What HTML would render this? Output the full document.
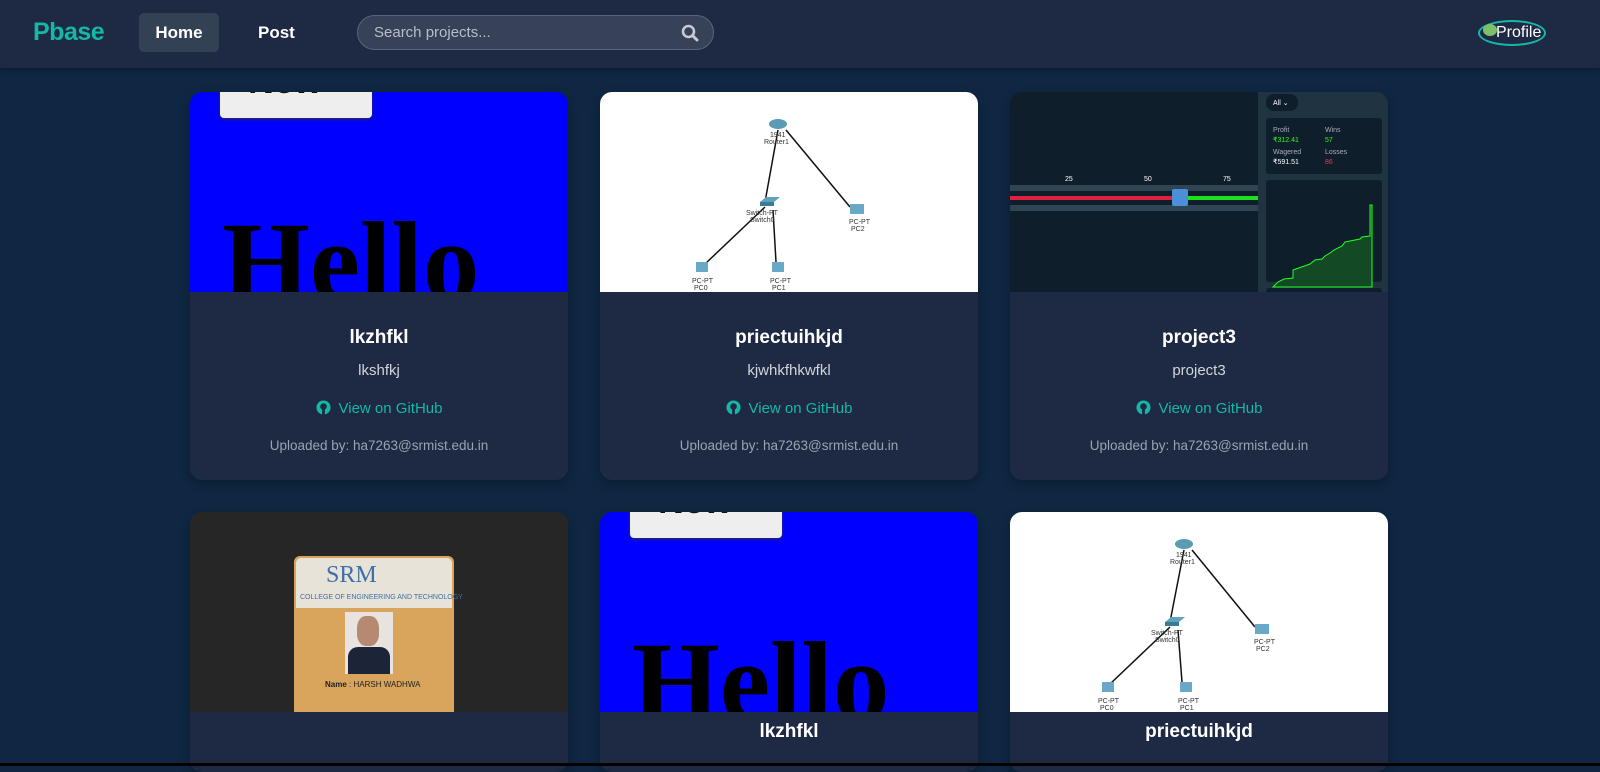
<!DOCTYPE html>
<html><head><meta charset="utf-8"><style>
*{box-sizing:border-box;margin:0;padding:0}
body{width:1600px;height:766px;overflow:hidden;background:#0f2742;font-family:"Liberation Sans",sans-serif;position:relative}
.nav{position:absolute;left:0;top:0;width:1600px;height:68px;background:#1e2943;box-shadow:0 2px 6px rgba(0,0,0,.3)}
.logo{position:absolute;left:33px;top:18px;color:#14b8a6;font-weight:bold;font-size:25px;letter-spacing:-.5px}
.home{position:absolute;left:139px;top:13px;width:80px;height:39px;background:#334155;border-radius:5px;color:#fff;font-size:17px;font-weight:bold;text-align:center;line-height:39px}
.post{position:absolute;left:258px;top:13px;color:#fff;font-size:17px;font-weight:bold;line-height:39px}
.search{position:absolute;left:357px;top:15px;width:357px;height:35px;background:#374157;border:1px solid #5b6477;border-radius:18px;color:#b8bec9;font-size:15px;line-height:33px;padding-left:16px}
.prof{position:absolute;left:1478px;top:20px;width:68px;height:26px;border:2px solid #14b8a6;border-radius:50%;color:#fff;font-size:16px;line-height:22px;padding-left:16px;background:#1e2943}
.card{position:absolute;width:378px;background:#1e2943;border-radius:12px;overflow:hidden;box-shadow:0 4px 10px rgba(0,0,0,.25)}
.img{position:absolute;left:0;top:0;width:378px;height:200px;overflow:hidden}
.t{position:absolute;width:100%;text-align:center;color:#fff;font-weight:bold;font-size:19px}
.d{position:absolute;width:100%;text-align:center;color:#d1d5db;font-size:15px}
.g{position:absolute;width:100%;text-align:center;color:#14b8a6;font-size:15px}
.u{position:absolute;width:100%;text-align:center;color:#9ca3af;font-size:13.5px}
.blue{background:#0000fe}
.hello{position:absolute;left:32px;top:114px;font-family:"Liberation Serif",serif;font-weight:bold;font-size:113px;color:#000;line-height:1}
.newb{position:absolute;left:30px;top:-10px;width:152px;height:36px;background:#eee;border-radius:4px;box-shadow:0 1px 3px #333;overflow:hidden}
.newb span{position:absolute;left:28px;top:-22px;font-size:36px;font-weight:bold;color:#111}
</style></head><body>
<div class="nav">
<div class="logo">Pbase</div>
<div class="home">Home</div>
<div class="post">Post</div>
<div class="search">Search projects...
<svg style="position:absolute;right:14px;top:8px" width="18" height="18" viewBox="0 0 18 18"><circle cx="7.5" cy="7.5" r="5.5" fill="none" stroke="#c5cad3" stroke-width="2.6"/><path d="M11.5 11.5L16 16" stroke="#c5cad3" stroke-width="3" stroke-linecap="round"/></svg></div>
<div class="prof"><span style="position:absolute;left:3px;top:2px;width:14px;height:12px;border-radius:50%;background:#7fbf6a"></span>Profile</div>
</div>

<!-- card 1 -->
<div class="card" style="left:190px;top:92px;height:388px">
<div class="img blue"><div class="newb"><span>New</span></div><div class="hello">Hello</div></div>
<div class="t" style="top:235px">lkzhfkl</div>
<div class="d" style="top:270px">lkshfkj</div>
<div class="g" style="top:308px"><svg width="15" height="15" viewBox="0 0 16 16" style="vertical-align:-2px;margin-right:8px"><circle cx="8" cy="8" r="7.5" fill="#14b8a6"/><circle cx="8" cy="7" r="3.5" fill="#1e2943"/><rect x="6.5" y="10" width="3" height="6" fill="#1e2943"/></svg>View on GitHub</div>
<div class="u" style="top:346px">Uploaded by: ha7263@srmist.edu.in</div>
</div>

<!-- card 2 -->
<div class="card" style="left:600px;top:92px;height:388px">
<div class="img" style="background:#fff">
<svg width="378" height="200" font-family="Liberation Sans" font-size="7" fill="#333">
<path d="M178 38L165 110M186 38L250 115M165 115L105 172M173 118L176 170" stroke="#111" stroke-width="1.5"/>
<ellipse cx="178" cy="32" rx="9" ry="5" fill="#5b9bb5"/><text x="170" y="45">1941</text><text x="164" y="52">Router1</text>
<path d="M160 110l6-5h14l-6 5z" fill="#5fa3bd"/><rect x="160" y="110" width="14" height="4" fill="#3b7a95"/><text x="146" y="123">Switch-PT</text><text x="150" y="130">Switch0</text>
<rect x="250" y="112" width="14" height="10" fill="#6aa8c8"/><text x="249" y="132">PC-PT</text><text x="251" y="139">PC2</text>
<rect x="96" y="170" width="12" height="10" fill="#6aa8c8"/><text x="92" y="191">PC-PT</text><text x="94" y="198">PC0</text>
<rect x="172" y="170" width="12" height="10" fill="#6aa8c8"/><text x="170" y="191">PC-PT</text><text x="172" y="198">PC1</text>
</svg></div>
<div class="t" style="top:235px">priectuihkjd</div>
<div class="d" style="top:270px">kjwhkfhkwfkl</div>
<div class="g" style="top:308px"><svg width="15" height="15" viewBox="0 0 16 16" style="vertical-align:-2px;margin-right:8px"><circle cx="8" cy="8" r="7.5" fill="#14b8a6"/><circle cx="8" cy="7" r="3.5" fill="#1e2943"/><rect x="6.5" y="10" width="3" height="6" fill="#1e2943"/></svg>View on GitHub</div>
<div class="u" style="top:346px">Uploaded by: ha7263@srmist.edu.in</div>
</div>

<!-- card 3 -->
<div class="card" style="left:1010px;top:92px;height:388px">
<div class="img" style="background:#0f1e2b">
<svg width="378" height="200" font-family="Liberation Sans" font-size="7" fill="#fff">
<rect x="248" y="0" width="130" height="200" fill="#1f3440"/>
<text x="55" y="89">25</text><text x="134" y="89">50</text><text x="213" y="89">75</text>
<rect x="0" y="93" width="248" height="6" fill="#2f4553"/><rect x="0" y="113" width="248" height="6" fill="#2f4553"/>
<rect x="0" y="104" width="168" height="4" fill="#e0203f"/><rect x="168" y="104" width="80" height="4" fill="#1fe01f"/>
<rect x="162" y="97" width="16" height="17" fill="#4a90d9" rx="2"/>
<rect x="256" y="2" width="32" height="17" rx="8" fill="#0f1e2b"/><text x="263" y="13">All ⌄</text>
<rect x="256" y="26" width="116" height="56" rx="3" fill="#0f1e2b"/>
<text x="263" y="40" fill="#aab">Profit</text><text x="263" y="50" fill="#2f2">₹312.41</text><text x="263" y="62" fill="#aab">Wagered</text><text x="263" y="72">₹591.51</text>
<text x="315" y="40" fill="#aab">Wins</text><text x="315" y="50" fill="#2f2">57</text><text x="315" y="62" fill="#aab">Losses</text><text x="315" y="72" fill="#e35">86</text>
<rect x="256" y="88" width="116" height="102" rx="3" fill="#0f1e2b"/>
<path d="M263 195L268 190L274 187L283 186L283 178L300 172L305 168L312 167L315 164L320 161L324 158L332 154L335 150L350 147L352 145L360 144L360 113L362 113V195Z" fill="#134a25" stroke="#2f2" stroke-width="1"/>
<rect x="256" y="196" width="116" height="6" rx="3" fill="#0f1e2b"/>
</svg></div>
<div class="t" style="top:235px">project3</div>
<div class="d" style="top:270px">project3</div>
<div class="g" style="top:308px"><svg width="15" height="15" viewBox="0 0 16 16" style="vertical-align:-2px;margin-right:8px"><circle cx="8" cy="8" r="7.5" fill="#14b8a6"/><circle cx="8" cy="7" r="3.5" fill="#1e2943"/><rect x="6.5" y="10" width="3" height="6" fill="#1e2943"/></svg>View on GitHub</div>
<div class="u" style="top:346px">Uploaded by: ha7263@srmist.edu.in</div>
</div>

<!-- row 2 -->
<div class="card" style="left:190px;top:512px;height:260px">
<div class="img" style="background:#262626">
<div style="position:absolute;left:104px;top:44px;width:160px;height:170px;background:#d9a45c;border-radius:6px"></div>
<div style="position:absolute;left:106px;top:46px;width:156px;height:50px;background:#e8e3d8;border-radius:5px 5px 0 0"></div>
<div style="position:absolute;left:136px;top:50px;font-family:'Liberation Serif',serif;color:#3d6fa8;font-size:24px">SRM</div>
<div style="position:absolute;left:110px;top:82px;color:#3d6fa8;font-size:7px;white-space:nowrap">COLLEGE OF ENGINEERING AND TECHNOLOGY</div>
<div style="position:absolute;left:155px;top:100px;width:48px;height:62px;background:#e8e3df"></div>
<div style="position:absolute;left:158px;top:135px;width:42px;height:27px;background:#1b2537;border-radius:10px 10px 0 0"></div>
<div style="position:absolute;left:167px;top:104px;width:22px;height:30px;background:#b58a70;border-radius:40%"></div>
<div style="position:absolute;left:135px;top:168px;font-size:8px;color:#222;white-space:nowrap"><b>Name</b> : HARSH WADHWA</div>
</div>
</div>
<div class="card" style="left:600px;top:512px;height:260px">
<div class="img blue"><div class="newb"><span>New</span></div><div class="hello">Hello</div></div>
<div class="t" style="top:209px">lkzhfkl</div>
</div>
<div class="card" style="left:1010px;top:512px;height:260px">
<div class="img" style="background:#fff">
<svg width="378" height="200" font-family="Liberation Sans" font-size="7" fill="#333">
<path d="M174 38L160 110M182 38L245 115M160 115L100 172M168 118L172 170" stroke="#111" stroke-width="1.5"/>
<ellipse cx="174" cy="32" rx="9" ry="5" fill="#5b9bb5"/><text x="166" y="45">1941</text><text x="160" y="52">Router1</text>
<path d="M155 110l6-5h14l-6 5z" fill="#5fa3bd"/><rect x="155" y="110" width="14" height="4" fill="#3b7a95"/><text x="141" y="123">Switch-PT</text><text x="145" y="130">Switch0</text>
<rect x="245" y="112" width="14" height="10" fill="#6aa8c8"/><text x="244" y="132">PC-PT</text><text x="246" y="139">PC2</text>
<rect x="92" y="170" width="12" height="10" fill="#6aa8c8"/><text x="88" y="191">PC-PT</text><text x="90" y="198">PC0</text>
<rect x="170" y="170" width="12" height="10" fill="#6aa8c8"/><text x="168" y="191">PC-PT</text><text x="170" y="198">PC1</text>
</svg></div>
<div class="t" style="top:209px">priectuihkjd</div>
</div>
<div style="position:absolute;left:0;top:763px;width:1600px;height:3px;background:#000"></div>
</body></html>
